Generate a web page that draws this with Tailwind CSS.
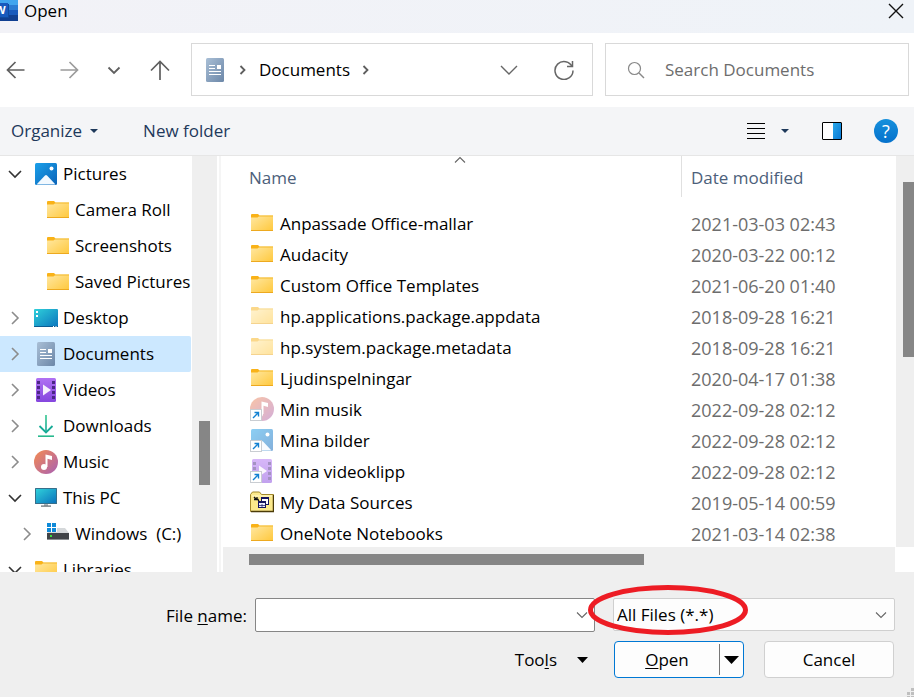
<!DOCTYPE html>
<html lang="en">
<head>
    <meta charset="UTF-8">
    <meta name="viewport" content="width=device-width, initial-scale=1.0">
    <title>Open</title>
    <script src="https://cdn.jsdelivr.net/npm/@tailwindcss/browser@4"></script>
</head>
<body class="flex flex-col h-screen overflow-hidden bg-white text-black text-[17px] leading-6 font-['Open_Sans',sans-serif]">

    <!-- Shared icons -->
    <svg class="absolute w-0 h-0" aria-hidden="true">
        <defs>
            <linearGradient id="gFolder" x1="0" y1="0" x2="1" y2="1"><stop offset="0" stop-color="#ffe8a3"/><stop offset="1" stop-color="#ffc83c"/></linearGradient>
            <linearGradient id="gDoc" x1="0" y1="0" x2="1" y2="1"><stop offset="0" stop-color="#a9bfd6"/><stop offset="1" stop-color="#6c87a8"/></linearGradient>
            <linearGradient id="gPic" x1="0" y1="0" x2="1" y2="1"><stop offset="0" stop-color="#1ba0ea"/><stop offset="1" stop-color="#0a63b8"/></linearGradient>
            <linearGradient id="gPane" x1="0" y1="0" x2="1" y2="1"><stop offset="0" stop-color="#2aa9ea"/><stop offset="1" stop-color="#0a78d4"/></linearGradient>
            <linearGradient id="gDesk" x1="0" y1="0" x2="1" y2="1"><stop offset="0" stop-color="#2fd0da"/><stop offset="1" stop-color="#0b74bd"/></linearGradient>
            <linearGradient id="gVid" x1="0" y1="0" x2="0" y2="1"><stop offset="0" stop-color="#b071f3"/><stop offset="1" stop-color="#8546de"/></linearGradient>
            <linearGradient id="gMus" x1="0" y1="0" x2="1" y2="1"><stop offset="0" stop-color="#f58b50"/><stop offset="1" stop-color="#a860b4"/></linearGradient>
            <linearGradient id="gDown" x1="0" y1="0" x2="0" y2="1"><stop offset="0" stop-color="#35c78f"/><stop offset="1" stop-color="#12a594"/></linearGradient>
        </defs>
        <symbol id="folder" viewBox="0 0 24 24">
            <path d="M1 4a1 1 0 0 1 1-1h6l2 2-2 2.500H1z" fill="#f9b218"/>
            <path d="M1 6.500h6.500L10 4.500h13V20H1z" fill="url(#gFolder)"/>
            <path d="M9.500 4.500H23v1H8.500z" fill="#f3b92f"/>
            <path d="M1 19h22v1H1z" fill="#eda91f"/>
        </symbol>
        <symbol id="documents" viewBox="0 0 24 24">
            <rect x="3" y="0" width="18" height="24" rx="1.500" fill="url(#gDoc)"/>
            <path d="M6 7.500h6M6 10.500h6M6 13.500h12M6 16.500h12" stroke="#fff" stroke-width="1.200"/>
            <rect x="14" y="7" width="4" height="4" fill="#fff"/>
        </symbol>
        <symbol id="pictures" viewBox="0 0 24 24">
            <rect x="1" y="1" width="22" height="22" rx="1.500" fill="url(#gPic)"/>
            <path d="M2.500 22.500 11 13.500q1-1 2 0l8.500 9z" fill="#f2f9ff"/>
            <circle cx="17.500" cy="6.500" r="2" fill="#fff"/>
        </symbol>
        <symbol id="desktop" viewBox="0 0 24 24">
            <rect x="0" y="3" width="24" height="18" rx="1" fill="url(#gDesk)"/>
            <path d="M0 20h24v0.500q0 .5-1 .5H1q-1 0-1-.5z" fill="#0c5c92"/>
            <path d="M2 5h2v2H2zM2 9h2v2H2z" fill="#fff"/>
            <path d="M19 20h1v1h-1zM21.500 20h1v1h-1z" fill="#fff"/>
        </symbol>
        <symbol id="videos" viewBox="0 0 24 24">
            <rect x="2" y="0" width="20" height="24" rx="1.500" fill="url(#gVid)"/>
            <path d="M3 3h3v3H3zM3 8h3v3H3zM3 13h3v3H3zM3 18h3v3H3zM18 3h3v3h-3zM18 8h3v3h-3zM18 13h3v3h-3zM18 18h3v3h-3z" fill="#4c2786"/>
            <path d="M9 6.500v11l8-5.500z" fill="#f6effd"/>
        </symbol>
        <symbol id="downloads" viewBox="0 0 24 24">
            <path d="M11.200 1h1.600v17h-1.600z" fill="url(#gDown)"/>
            <path d="M5.500 12l6.500 6.500 6.500-6.500" fill="none" stroke="#17ab96" stroke-width="1.800"/>
            <path d="M4 22.200h16" stroke="#28b98e" stroke-width="1.600"/>
        </symbol>
        <symbol id="music" viewBox="0 0 24 24">
            <circle cx="12" cy="12" r="12" fill="url(#gMus)"/>
            <circle cx="10" cy="17" r="3" fill="#fff"/>
            <path d="M11.500 17V4.500l6.500 1.500v4l-4.500-1.200V17z" fill="#fff"/>
        </symbol>
        <symbol id="pc" viewBox="0 0 24 24">
            <rect x="1" y="2" width="22" height="16" rx="0.500" fill="#376f8b"/>
            <rect x="2" y="3" width="20" height="14" fill="url(#gDesk)"/>
            <path d="M10 18h4v2h-4z" fill="#aeb6bb"/>
            <path d="M7 19.500h10v1.200H7z" fill="#5c666d"/>
        </symbol>
        <symbol id="drive" viewBox="0 0 24 24">
            <path d="M5 6h14l4 5H1z" fill="#d5d8da"/>
            <rect x="1" y="11" width="22" height="7" fill="#404347"/>
            <path d="M1 17h22v1H1z" fill="#8b8e91"/>
            <rect x="4" y="13" width="2" height="2" fill="#3ce03c"/>
            <path d="M0 0h11v10H0z" fill="#fff"/>
            <path d="M1 1h4v4H1zM6 1h4v4H6zM1 6h4v4H1zM6 6h4v4H6z" fill="#0f8ad8"/>
        </symbol>
        <symbol id="shortcut" viewBox="0 0 24 24">
            <rect x="0.500" y="12.500" width="11" height="11" fill="#fff" stroke="#c9cdd2"/>
            <path d="M3 21l5.500-5.500M4.500 15.500h4v4" fill="none" stroke="#1381d2" stroke-width="1.400"/>
        </symbol>
        <symbol id="datasource" viewBox="0 0 24 24">
            <path d="M.5 21.500V4.500l2-2.500h7l2 2.500h12v17z" fill="#fbe98b" stroke="#a1872a"/>
            <path d="M1 21.500h22.500V5" fill="none" stroke="#4b3b08" stroke-width="1.500"/>
            <path d="M2 6h20" stroke="#fff8cf"/>
            <path d="M4 7l2 2M7 7v3M4 9.500h4l1 2" fill="none" stroke="#111" stroke-width="1.300"/>
            <rect x="11.500" y="7.500" width="7" height="7" fill="#fff" stroke="#14145e"/>
            <path d="M11 8h8" stroke="#14145e" stroke-width="2"/>
            <rect x="8.500" y="11.500" width="7" height="6" fill="#e9ecff" stroke="#14145e"/>
            <path d="M8 12h8" stroke="#14145e" stroke-width="2"/>
            <path d="M12 14v4M9 15.500h6" stroke="#14145e" stroke-width="0.700"/>
        </symbol>
        <symbol id="right" viewBox="0 0 14 14"><path d="M4 1l6 6-6 6" fill="none" stroke="#8c8c8c" stroke-width="1.600"/></symbol>
        <symbol id="down" viewBox="0 0 14 14"><path d="M1 4l6 6 6-6" fill="none" stroke="#333" stroke-width="1.600"/></symbol>
        <symbol id="crumb" viewBox="0 0 8 10"><path d="M1.500 1l4 4-4 4" fill="none" stroke="#5e5e5e" stroke-width="1.800"/></symbol>
        <symbol id="thin" viewBox="0 0 12 8"><path d="M1 1.500l5 5 5-5" fill="none" stroke="#666" stroke-width="1.100"/></symbol>
    </svg>

    <!-- Title bar -->
    <header class="flex justify-between h-[33px] shrink-0 bg-linear-to-r from-[#f2f2f7] to-[#eff3f8]">
        <div class="flex items-start gap-1.5">
            <svg class="w-[18px] h-[21px]" viewBox="0 0 18 21" aria-hidden="true">
                <path d="M0 0h18v5H0z" fill="#41a5ee"/>
                <path d="M0 5h18v5H0z" fill="#2b7cd3"/>
                <path d="M0 10h18v5H0z" fill="#185abd"/>
                <path d="M0 15h18v6H0z" fill="#103f91"/>
                <path d="M0 4h9v14H0z" fill="#0f4a9e"/>
                <path d="M0 3h8v14H0z" fill="#185abd"/>
                <text x="-5" y="14" font-size="11" font-weight="700" fill="#fff">W</text>
            </svg>
            <h1 class="leading-[22px]">Open</h1>
        </div>
        <button class="w-9 h-[22px] grid place-items-center" aria-label="Close">
            <svg class="w-4 h-4" viewBox="0 0 16 16"><path d="M1 1l14 14M15 1L1 15" stroke="#111" stroke-width="1.400"/></svg>
        </button>
    </header>

    <!-- Navigation -->
    <nav class="flex items-center h-[74px] shrink-0 pr-[5px] pb-px gap-3">
        <div class="flex items-center justify-between w-[179px] pl-1.5 pr-[9px]">
            <button aria-label="Back"><svg class="w-5 h-5" viewBox="0 0 20 20"><path d="M18.500 10H1.500M9.500 2L1.500 10l8 8" fill="none" stroke="#5f5f5f" stroke-width="1.700"/></svg></button>
            <button class="ml-4" aria-label="Forward"><svg class="w-5 h-5" viewBox="0 0 20 20"><path d="M1.500 10h17M10.500 2l8 8-8 8" fill="none" stroke="#9b9b9b" stroke-width="1.700"/></svg></button>
            <button class="ml-3" aria-label="Recent locations"><svg class="w-3.5 h-3.5" viewBox="0 0 14 14"><path d="M1.500 4.500L7 10l5.500-5.500" fill="none" stroke="#5f5f5f" stroke-width="1.800"/></svg></button>
            <button class="ml-3" aria-label="Up"><svg class="w-5 h-5" viewBox="0 0 20 20"><path d="M10 20V1.500M1 10.500l9-9 9 9" fill="none" stroke="#5f5f5f" stroke-width="1.700"/></svg></button>
        </div>
        <div class="flex items-center flex-1 h-[53px] border border-[#d9d9d9] pl-[11px] pr-[18px]">
            <svg class="w-6 h-6" aria-hidden="true"><use href="#documents"/></svg>
            <svg class="w-2 h-2.5 mx-3" aria-hidden="true"><use href="#crumb"/></svg>
            <a href="#">Documents</a>
            <svg class="w-2 h-2.5 ml-3" aria-hidden="true"><use href="#crumb"/></svg>
            <button class="ml-auto" aria-label="Previous locations"><svg class="w-[18px] h-3" viewBox="0 0 18 12"><path d="M1 2l8 8 8-8" fill="none" stroke="#666" stroke-width="1.400"/></svg></button>
            <button class="ml-9" aria-label="Refresh"><svg class="w-5 h-5" viewBox="0 0 20 20"><path d="M18.300 7A9 9 0 1 0 19 10.500M18.500 1v5.500H13" fill="none" stroke="#666" stroke-width="1.500"/></svg></button>
        </div>
        <label class="flex items-center w-[304px] h-[53px] border border-[#d9d9d9] pl-[21px] gap-5">
            <svg class="w-[18px] h-[18px] shrink-0" viewBox="0 0 18 18" aria-hidden="true"><circle cx="7.500" cy="7.500" r="6" fill="none" stroke="#888" stroke-width="1.200"/><path d="M12 12l5 5" stroke="#888" stroke-width="1.400"/></svg>
            <input type="text" class="w-full min-w-0 outline-none placeholder:text-[#6d6d6d]" placeholder="Search Documents" aria-label="Search Documents">
        </label>
    </nav>

    <!-- Toolbar -->
    <div class="flex items-center h-[49px] shrink-0 px-4 pl-[11px] bg-[#f4f5f7] border-b border-[#e6e6e6] text-[#1e395b]">
        <button class="flex items-center gap-2">Organize
            <svg class="w-2 h-1" viewBox="0 0 8 4" aria-hidden="true"><path d="M0 0h8L4 4z" fill="#1e395b"/></svg>
        </button>
        <button class="ml-[45px]">New folder</button>
        <button class="ml-auto flex items-center gap-4" aria-label="Change view">
            <svg class="w-[18px] h-4" viewBox="0 0 18 16"><path d="M0 .5h18M0 5.500h18M0 10.500h18M0 15.500h18" stroke="#000"/></svg>
            <svg class="w-2 h-1" viewBox="0 0 8 4"><path d="M0 0h8L4 4z" fill="#1e395b"/></svg>
        </button>
        <button class="ml-[33px]" aria-label="Preview pane">
            <svg class="w-5 h-[18px]" viewBox="0 0 20 18"><rect x="1" y="1" width="18" height="16" fill="#fff"/><path d="M11 1h8v16h-8z" fill="url(#gPane)"/><rect x=".5" y=".5" width="19" height="17" rx=".5" fill="none" stroke="#000"/></svg>
        </button>
        <button class="ml-8 w-6 h-6 rounded-full bg-linear-to-b from-[#1690dc] to-[#0671cc] text-white text-[18px] leading-6" aria-label="Help">?</button>
    </div>

    <main class="flex flex-1 min-h-0">
        <!-- Folder tree -->
        <ul class="w-48 shrink-0 overflow-hidden whitespace-nowrap">
            <li class="flex items-center h-9 pl-2"><svg class="w-3.5 h-3.5 mr-3"><use href="#down"/></svg><svg class="w-6 h-6 mr-[5px]"><use href="#pictures"/></svg>Pictures</li>
            <li class="flex items-center h-9 pl-[46px]"><svg class="w-6 h-6 mr-[5px]"><use href="#folder"/></svg>Camera Roll</li>
            <li class="flex items-center h-9 pl-[46px]"><svg class="w-6 h-6 mr-[5px]"><use href="#folder"/></svg>Screenshots</li>
            <li class="flex items-center h-9 pl-[46px]"><svg class="w-6 h-6 mr-[5px] shrink-0"><use href="#folder"/></svg>Saved Pictures</li>
            <li class="flex items-center h-9 pl-2"><svg class="w-3.5 h-3.5 mr-3"><use href="#right"/></svg><svg class="w-6 h-6 mr-[5px]"><use href="#desktop"/></svg>Desktop</li>
            <li class="flex items-center h-9 pl-2 mr-px rounded-r-xs bg-[#cce8ff]"><svg class="w-3.5 h-3.5 mr-3"><use href="#right"/></svg><svg class="w-6 h-6 mr-[5px]"><use href="#documents"/></svg>Documents</li>
            <li class="flex items-center h-9 pl-2"><svg class="w-3.5 h-3.5 mr-3"><use href="#right"/></svg><svg class="w-6 h-6 mr-[5px]"><use href="#videos"/></svg>Videos</li>
            <li class="flex items-center h-9 pl-2"><svg class="w-3.5 h-3.5 mr-3"><use href="#right"/></svg><svg class="w-6 h-6 mr-[5px]"><use href="#downloads"/></svg>Downloads</li>
            <li class="flex items-center h-9 pl-2"><svg class="w-3.5 h-3.5 mr-3"><use href="#right"/></svg><svg class="w-6 h-6 mr-[5px]"><use href="#music"/></svg>Music</li>
            <li class="flex items-center h-9 pl-2"><svg class="w-3.5 h-3.5 mr-3"><use href="#down"/></svg><svg class="w-6 h-6 mr-[5px]"><use href="#pc"/></svg>This PC</li>
            <li class="flex items-center h-9 pl-5"><svg class="w-3.5 h-3.5 mr-3"><use href="#right"/></svg><svg class="w-6 h-6 mr-[5px]"><use href="#drive"/></svg><span class="whitespace-pre">Windows  (C:)</span></li>
            <li class="flex items-center h-9 pl-2"><svg class="w-3.5 h-3.5 mr-3"><use href="#down"/></svg><svg class="w-6 h-6 mr-[5px]"><use href="#folder"/></svg>Libraries</li>
        </ul>
        <div class="w-[25px] shrink-0 bg-[#efefef] pt-[265px] pl-[7px]"><div class="w-[11px] h-16 bg-[#868686]"></div></div>
        <div class="w-1 shrink-0 border-r-2 border-[#f5f5f5]"></div>

        <!-- File list -->
        <div class="flex flex-col flex-1 min-w-0 pl-0.5">
            <div class="flex flex-1 min-h-0">
                <div class="flex-1 min-w-0 overflow-hidden relative">
                    <table class="w-full table-fixed text-left whitespace-nowrap">
                        <thead class="text-[#4c607a]">
                            <tr class="h-[52px] align-top">
                                <th class="p-0 font-normal"><div class="h-[41px] pl-[26px] pt-2.5 border-r border-[#e0e0e0]">Name</div></th>
                                <th class="p-0 pl-[9px] pt-2.5 w-[214px] font-normal">Date modified</th>
                            </tr>
                        </thead>
                        <tbody class="text-[#6d6d6d] [&_svg]:mb-0.5">
                            <tr class="h-[31px]"><td class="p-0 pl-[27px] text-black"><div class="flex items-center gap-1.5"><svg class="w-6 h-6"><use href="#folder"/></svg>Anpassade Office-mallar</div></td><td class="p-0 pl-[9px] text-[18px]">2021-03-03 02:43</td></tr>
                            <tr class="h-[31px]"><td class="p-0 pl-[27px] text-black"><div class="flex items-center gap-1.5"><svg class="w-6 h-6"><use href="#folder"/></svg>Audacity</div></td><td class="p-0 pl-[9px] text-[18px]">2020-03-22 00:12</td></tr>
                            <tr class="h-[31px]"><td class="p-0 pl-[27px] text-black"><div class="flex items-center gap-1.5"><svg class="w-6 h-6"><use href="#folder"/></svg>Custom Office Templates</div></td><td class="p-0 pl-[9px] text-[18px]">2021-06-20 01:40</td></tr>
                            <tr class="h-[31px]"><td class="p-0 pl-[27px] text-black"><div class="flex items-center gap-1.5"><svg class="w-6 h-6 opacity-50"><use href="#folder"/></svg>hp.applications.package.appdata</div></td><td class="p-0 pl-[9px] text-[18px]">2018-09-28 16:21</td></tr>
                            <tr class="h-[31px]"><td class="p-0 pl-[27px] text-black"><div class="flex items-center gap-1.5"><svg class="w-6 h-6 opacity-50"><use href="#folder"/></svg>hp.system.package.metadata</div></td><td class="p-0 pl-[9px] text-[18px]">2018-09-28 16:21</td></tr>
                            <tr class="h-[31px]"><td class="p-0 pl-[27px] text-black"><div class="flex items-center gap-1.5"><svg class="w-6 h-6"><use href="#folder"/></svg>Ljudinspelningar</div></td><td class="p-0 pl-[9px] text-[18px]">2020-04-17 01:38</td></tr>
                            <tr class="h-[31px]"><td class="p-0 pl-[27px] text-black"><div class="flex items-center gap-1.5"><svg class="w-6 h-6"><use href="#music" opacity="0.5"/><use href="#shortcut"/></svg>Min musik</div></td><td class="p-0 pl-[9px] text-[18px]">2022-09-28 02:12</td></tr>
                            <tr class="h-[31px]"><td class="p-0 pl-[27px] text-black"><div class="flex items-center gap-1.5"><svg class="w-6 h-6"><use href="#pictures" opacity="0.5"/><use href="#shortcut"/></svg>Mina bilder</div></td><td class="p-0 pl-[9px] text-[18px]">2022-09-28 02:12</td></tr>
                            <tr class="h-[31px]"><td class="p-0 pl-[27px] text-black"><div class="flex items-center gap-1.5"><svg class="w-6 h-6"><use href="#videos" opacity="0.5"/><use href="#shortcut"/></svg>Mina videoklipp</div></td><td class="p-0 pl-[9px] text-[18px]">2022-09-28 02:12</td></tr>
                            <tr class="h-[31px]"><td class="p-0 pl-[27px] text-black"><div class="flex items-center gap-1.5"><svg class="w-6 h-6"><use href="#datasource"/></svg>My Data Sources</div></td><td class="p-0 pl-[9px] text-[18px]">2019-05-14 00:59</td></tr>
                            <tr class="h-[31px]"><td class="p-0 pl-[27px] text-black"><div class="flex items-center gap-1.5"><svg class="w-6 h-6"><use href="#folder"/></svg>OneNote Notebooks</div></td><td class="p-0 pl-[9px] text-[18px]">2021-03-14 02:38</td></tr>
                        </tbody>
                    </table>
                    <svg class="absolute top-0 left-[231px] w-3 h-2 rotate-180" aria-hidden="true"><use href="#thin"/></svg>
                </div>
                <div class="w-[18px] shrink-0 bg-[#efefef] pt-[26px] pl-[7px]"><div class="h-[175px] bg-[#868686]"></div></div>
            </div>
            <div class="h-[25px] shrink-0 mr-[19px] bg-[#efefef] pt-[7px] pl-[26px]"><div class="w-[395px] h-[11px] bg-[#868686]"></div></div>
        </div>
    </main>

    <!-- File name, filter and actions -->
    <footer class="relative shrink-0 bg-[#efefef] pt-[26px] pb-[19px] pr-[19px]">
        <div class="flex items-start">
            <label for="fileName" class="w-[247px] text-right leading-[35px]">File <u class="underline-offset-2">n</u>ame:</label>
            <div class="flex items-center flex-1 ml-2 mr-[18px] h-[34px] bg-white border border-[#868686] rounded-xs pr-1.5">
                <input id="fileName" type="text" class="flex-1 min-w-0 px-1 outline-none">
                <svg class="w-3 h-2" aria-hidden="true"><use href="#thin"/></svg>
            </div>
            <div class="relative w-[282px]">
                <select class="block appearance-none w-full h-[33px] pl-[3px] bg-[#fdfdfd] border border-[#cfcfcf] rounded-xs" aria-label="File type">
                    <option>All Files (*.*)</option>
                </select>
                <svg class="absolute right-2 top-[13px] w-3 h-2 pointer-events-none" aria-hidden="true"><use href="#thin"/></svg>
                <svg class="absolute -left-[25px] -top-[13px] w-40 h-[50px] pointer-events-none" viewBox="0 0 160 50" aria-hidden="true"><ellipse cx="80" cy="25" rx="77.500" ry="22.500" fill="none" stroke="#ed1c24" stroke-width="5"/></svg>
            </div>
        </div>
        <div class="flex items-center justify-end mt-2 pr-px">
            <button class="flex items-center gap-5 mr-[26px]"><span>Too<u class="underline-offset-2">l</u>s</span>
                <svg class="w-[11px] h-1.5" viewBox="0 0 11 6" aria-hidden="true"><path d="M0 0h11L5.500 6z"/></svg>
            </button>
            <div class="flex items-center w-[130px] h-[37px] bg-[#fdfdfd] border border-[#0078d4] rounded">
                <button class="flex-1 h-[31px] border-r border-[#777]"><u class="underline-offset-2">O</u>pen</button>
                <button class="w-[23px] grid place-items-center" aria-label="Open options"><svg class="w-[15px] h-2" viewBox="0 0 15 8"><path d="M0 0h15L7.500 8z"/></svg></button>
            </div>
            <button class="ml-5 w-[130px] h-[37px] bg-[#fdfdfd] border border-[#d0d0d0] rounded">Cancel</button>
        </div>
        <svg class="absolute right-0 bottom-0 w-[7px] h-[9px]" viewBox="0 0 7 9" aria-hidden="true"><path d="M4 0h3v3H4zM0 4h3v3H0zM4 4h3v3H4zM4 8h3v1H4zM0 8h3v1H0z" fill="#bfbfbf"/></svg>
    </footer>
</body>
</html>
